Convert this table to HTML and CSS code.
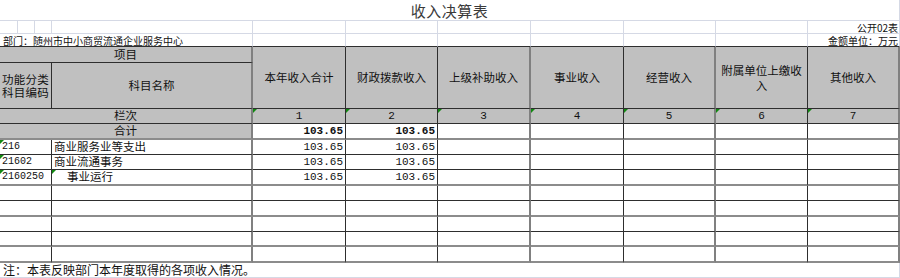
FILE: index.html
```html
<!DOCTYPE html>
<html lang="zh">
<head>
<meta charset="utf-8">
<title>收入决算表</title>
<link rel="stylesheet" href="styles.css">
</head>
<body>
<div class="sheet">
  <!-- row 1 -->
  <div class="c lg title s11">收入决算表</div>
  <!-- row 2 -->
  <div class="c lg"></div><div class="c lg"></div><div class="c lg"></div><div class="c lg"></div>
  <div class="c lg"></div><div class="c lg"></div><div class="c lg"></div><div class="c lg"></div>
  <div class="c lg"></div><div class="c lg"></div>
  <div class="c lg small right">公开02表</div>
  <!-- row 3 -->
  <div class="c lr small left s4">部门：随州市中小商贸流通企业服务中心</div>
  <div class="c lr"></div><div class="c lr"></div><div class="c lr"></div>
  <div class="c lr"></div><div class="c lr"></div><div class="c lr"></div>
  <div class="c lr small right">金额单位：万元</div>
  <!-- row 4/5 header -->
  <div class="c hd s4 vg">项目</div>
  <div class="c hd r2">本年收入合计</div>
  <div class="c hd r2">财政拨款收入</div>
  <div class="c hd r2 vg">上级补助收入</div>
  <div class="c hd r2">事业收入</div>
  <div class="c hd r2 vg">经营收入</div>
  <div class="c hd r2 wrap">附属单位上缴收入</div>
  <div class="c hd r2 vg">其他收入</div>
  <div class="c hd s3 two"><span>功能分类</span><span>科目编码</span></div>
  <div class="c hd vg">科目名称</div>
  <!-- row 6 -->
  <div class="c hd s4 vg">栏次</div>
  <div class="c hd num-c m">1</div>
  <div class="c hd num-c m">2</div>
  <div class="c hd num-c m vg">3</div>
  <div class="c hd num-c m">4</div>
  <div class="c hd num-c m vg">5</div>
  <div class="c hd num-c m">6</div>
  <div class="c hd num-c m vg">7</div>
  <!-- row 7 合计 -->
  <div class="c hd s4 vg hg">合计</div>
  <div class="c num bold hg">103.65</div>
  <div class="c num bold hg">103.65</div>
  <div class="c hg vg"></div><div class="c hg"></div><div class="c hg vg"></div><div class="c hg"></div><div class="c hg vg"></div>
  <!-- row 8 -->
  <div class="c code s3 m">216</div>
  <div class="c name vg">商业服务业等支出</div>
  <div class="c num">103.65</div>
  <div class="c num">103.65</div>
  <div class="c vg"></div><div class="c"></div><div class="c vg"></div><div class="c"></div><div class="c vg"></div>
  <!-- row 9 -->
  <div class="c code s3 m">21602</div>
  <div class="c name vg">商业流通事务</div>
  <div class="c num">103.65</div>
  <div class="c num">103.65</div>
  <div class="c vg"></div><div class="c"></div><div class="c vg"></div><div class="c"></div><div class="c vg"></div>
  <!-- row 10 -->
  <div class="c code s3 m hg">2160250</div>
  <div class="c name indent vg hg m">事业运行</div>
  <div class="c num hg">103.65</div>
  <div class="c num hg">103.65</div>
  <div class="c vg hg"></div><div class="c hg"></div><div class="c vg hg"></div><div class="c hg"></div><div class="c vg hg"></div>
  <!-- row 11 -->
  <div class="c s3"></div><div class="c vg"></div><div class="c"></div><div class="c"></div>
  <div class="c vg"></div><div class="c"></div><div class="c vg"></div><div class="c"></div><div class="c vg"></div>
  <!-- row 12 -->
  <div class="c s3 hg"></div><div class="c vg hg"></div><div class="c hg"></div><div class="c hg"></div>
  <div class="c vg hg"></div><div class="c hg"></div><div class="c vg hg"></div><div class="c hg"></div><div class="c vg hg"></div>
  <!-- row 13 -->
  <div class="c s3"></div><div class="c vg"></div><div class="c"></div><div class="c"></div>
  <div class="c vg"></div><div class="c"></div><div class="c vg"></div><div class="c"></div><div class="c vg"></div>
  <!-- row 14 -->
  <div class="c s3 hg"></div><div class="c vg hg"></div><div class="c hg"></div><div class="c hg"></div>
  <div class="c vg hg"></div><div class="c hg"></div><div class="c vg hg"></div><div class="c hg"></div><div class="c vg hg"></div>
  <!-- row 15 -->
  <div class="c s3 hg"></div><div class="c vg hg"></div><div class="c hg"></div><div class="c hg"></div>
  <div class="c vg hg"></div><div class="c hg"></div><div class="c vg hg"></div><div class="c hg"></div><div class="c vg hg"></div>
  <!-- row 16 note -->
  <div class="c lg note s11">注：本表反映部门本年度取得的各项收入情况。</div>
</div>
</body>
</html>
```

FILE: styles.css
```css
html, body {
  margin: 0;
  padding: 0;
  background: #ffffff;
}

.sheet {
  display: grid;
  width: 900px;
  grid-template-columns: 18px 17px 17px 201px 93px 92px 93px 93px 92px 92px 92px;
  grid-template-rows: 21px 13px 13px 16px 46px 15px 16px 15px 15px 16px 15px 16px 15px 15px 16px 15px;
  font-family: "Noto Sans CJK SC", "Noto Sans", sans-serif;
  color: #111;
}

.c {
  box-sizing: border-box;
  border-right: 1px solid #2e2e2e;
  border-bottom: 1px solid #2e2e2e;
  display: flex;
  align-items: center;
  justify-content: center;
  font-size: 11.5px;
  line-height: 1;
  white-space: nowrap;
  position: relative;
  min-width: 0;
}

/* light spreadsheet gridlines */
.lg {
  border-right-color: #d5d9e5;
  border-bottom-color: #d5d9e5;
}

.lr {
  border-right-color: #d5d9e5;
}

/* spans */
.s3 { grid-column: span 3; }
.s4 { grid-column: span 4; }
.s11 { grid-column: span 11; }
.r2 { grid-row: span 2; }

/* grey double-ish rules */
.vg {
  border-right: 2px solid #808080;
}

.hg {
  border-bottom: 2px solid #8c8c8c;
}

.title {
  font-size: 15px;
  color: #3a3a3a;
  letter-spacing: 0.5px;
}

.small {
  font-size: 10px;
  line-height: 11px;
  overflow: hidden;
}

.left {
  justify-content: flex-start;
  padding-left: 3px;
}

.right {
  justify-content: flex-end;
  padding-right: 1px;
}

.hd {
  background: #c0c0c0;
}

.two {
  flex-direction: column;
  letter-spacing: 0.2px;
}

.two span {
  display: block;
  height: 13px;
  line-height: 13px;
}

.wrap {
  white-space: normal;
  text-align: center;
  line-height: 15px;
  padding: 0 4px;
}

.num-c {
  font-family: "Liberation Mono", monospace;
  font-size: 11px;
}

.num {
  justify-content: flex-end;
  padding-right: 2px;
  font-family: "Liberation Mono", monospace;
  font-size: 11px;
}

.bold {
  font-weight: bold;
}

.code {
  justify-content: flex-start;
  padding-left: 2px;
  font-family: "Liberation Mono", monospace;
  font-size: 10px;
}

.name {
  justify-content: flex-start;
  padding-left: 2px;
}

.indent {
  padding-left: 15px;
}

.note {
  justify-content: flex-start;
  padding-left: 3px;
  font-size: 12px;
}

/* green "number stored as text" markers */
.m::before {
  content: "";
  position: absolute;
  left: 0;
  top: 0;
  width: 0;
  height: 0;
  border-top: 4px solid #118811;
  border-right: 4px solid transparent;
}
```
